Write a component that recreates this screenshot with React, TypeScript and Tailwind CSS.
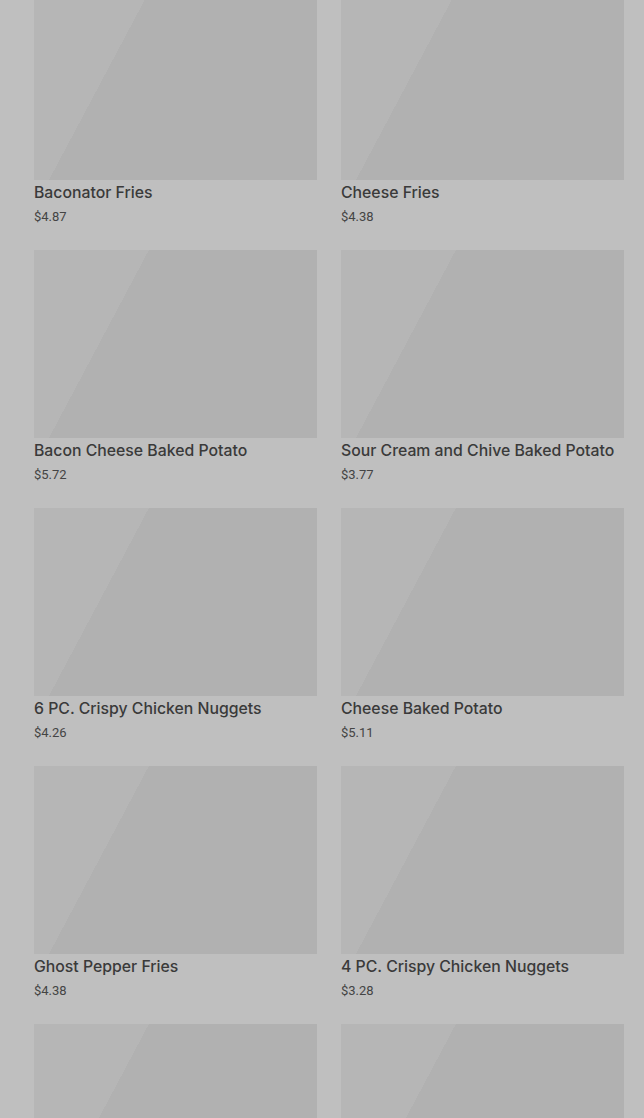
import React from "react"

interface MenuItem {
    name: string,
    price: string,
}

const items: MenuItem[] = [
    { name: "Baconator Fries", price: "$4.87" },
    { name: "Cheese Fries", price: "$4.38" },
    { name: "Bacon Cheese Baked Potato", price: "$5.72" },
    { name: "Sour Cream and Chive Baked Potato", price: "$3.77" },
    { name: "6 PC. Crispy Chicken Nuggets", price: "$4.26" },
    { name: "Cheese Baked Potato", price: "$5.11" },
    { name: "Ghost Pepper Fries", price: "$4.38" },
    { name: "4 PC. Crispy Chicken Nuggets", price: "$3.28" },
    { name: "", price: "" },
    { name: "", price: "" },
]

const MenuCard = ({ item }: { item: MenuItem }) => {
    return (
        <div className="flex flex-col">
            <div className="h-[188px] w-full bg-[linear-gradient(118deg,#b6b6b6_30%,#b1b1b1_30%)]" />
            <div className="mt-[1px] text-[15.8px] leading-6 font-medium text-[#3a3a3a] font-['Inter',sans-serif]">{item.name}</div>
            <div className="mt-[2px] text-[13px] leading-5 text-[#444444] font-['Roboto',sans-serif]">{item.price}</div>
        </div>
    )
}

export default function App() {
    return (
        <div className="w-[644px] h-[1118px] overflow-hidden bg-[#bfbfbf] font-['Inter','Liberation_Sans',sans-serif]">
            <div className="grid grid-cols-2 gap-x-6 gap-y-[23px] pl-[34px] pr-[20px] mt-[-8px]">
                {items.map((item, i) => (
                    <MenuCard key={i} item={item} />
                ))}
            </div>
        </div>
    )
}
